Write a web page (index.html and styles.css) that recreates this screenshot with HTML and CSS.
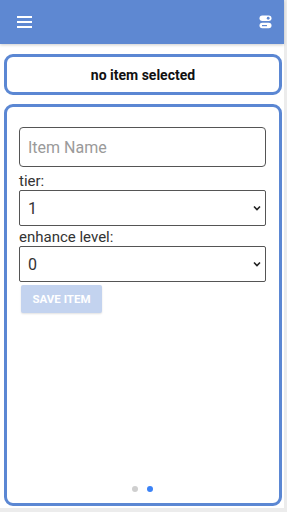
FILE: index.html
```html
<!doctype html>
<html>
<head>
    <meta charset="UTF-8">
    <link rel="stylesheet" href="styles.css">
</head>
<body>
    <div class="app">
        <header class="topbar">
            <svg class="menu-icon" width="15" height="12" viewBox="0 0 15 12">
                <rect x="0" y="0" width="15" height="2" fill="#fff"/>
                <rect x="0" y="5" width="15" height="2" fill="#fff"/>
                <rect x="0" y="10" width="15" height="2" fill="#fff"/>
            </svg>
            <svg class="toggle-icon" width="13" height="14" viewBox="0 0 13 14">
                <rect x="0.5" y="0.5" width="12" height="5.5" rx="2.75" fill="#fff"/>
                <circle cx="9.2" cy="3.25" r="1.4" fill="#5e88d2"/>
                <rect x="0.5" y="7.8" width="12" height="5.5" rx="2.75" fill="#fff"/>
                <rect x="3" y="10" width="5" height="1.2" fill="#5e88d2"/>
            </svg>
        </header>

        <div class="card status">no item selected</div>

        <div class="card editor">
            <input class="field" type="text" placeholder="Item Name">
            <label class="label">tier:</label>
            <div class="select-wrap">
                <select class="field-select">
                    <option>1</option>
                </select>
                <svg class="chevron" width="8" height="6" viewBox="0 0 8 6">
                    <path d="M1 1.5 L4 4.5 L7 1.5" stroke="#222" stroke-width="1.6" fill="none"/>
                </svg>
            </div>
            <label class="label">enhance level:</label>
            <div class="select-wrap">
                <select class="field-select">
                    <option>0</option>
                </select>
                <svg class="chevron" width="8" height="6" viewBox="0 0 8 6">
                    <path d="M1 1.5 L4 4.5 L7 1.5" stroke="#222" stroke-width="1.6" fill="none"/>
                </svg>
            </div>
            <button class="save-btn" disabled>SAVE ITEM</button>

            <div class="dots">
                <span class="dot"></span>
                <span class="dot active"></span>
            </div>
        </div>
    </div>
</body>
</html>
```

FILE: styles.css
```css
* {
    box-sizing: border-box;
}
body {
    margin: 0;
    background-color: #ececec;
    font-family: Roboto, "Liberation Sans", sans-serif;
}

.app {
    width: 284px;
    height: 508px;
    background-color: #fff;
    display: flex;
    flex-direction: column;
}

.topbar {
    height: 44px;
    background-color: #5e88d2;
    display: flex;
    align-items: center;
    justify-content: space-between;
    padding: 0 12px 0 17px;
    box-shadow: 0 1px 3px rgba(0,0,0,0.2);
}

.card {
    margin: 0 2px 0 4px;
    border: 3px solid #5b87d3;
    border-radius: 9px;
    background-color: #fff;
}

.status {
    margin-top: 10px;
    height: 41px;
    display: flex;
    align-items: center;
    justify-content: center;
    font-weight: bold;
    font-size: 14px;
    color: #111;
}

.editor {
    margin-top: 9px;
    height: 402px;
    padding: 20px 13px 0 12px;
    display: flex;
    flex-direction: column;
    position: relative;
}

.field {
    height: 40px;
    border: 1px solid #555;
    border-radius: 4px;
    padding: 0 8px;
    font-family: inherit;
    font-size: 16px;
    color: #222;
    margin-bottom: 7px;
    outline: none;
}
.field::placeholder {
    color: #9a9a9a;
}

.label {
    font-size: 15px;
    line-height: 14px;
    color: #333;
    margin-bottom: 2px;
}

.select-wrap {
    position: relative;
    margin-bottom: 4px;
}

.field-select {
    width: 100%;
    height: 36px;
    border: 1px solid #555;
    border-radius: 2px;
    background-color: #fff;
    padding: 0 8px;
    font-family: inherit;
    font-size: 16px;
    color: #333;
    -webkit-appearance: none;
    appearance: none;
    outline: none;
}

.chevron {
    position: absolute;
    right: 5px;
    top: 15px;
    pointer-events: none;
}

.save-btn {
    align-self: flex-start;
    margin: -1px 0 0 2px;
    width: 81px;
    height: 28px;
    border: none;
    border-radius: 2px;
    background-color: #c3d3ef;
    color: #fff;
    font-family: inherit;
    font-weight: bold;
    font-size: 11.5px;
    padding: 0;
    box-shadow: 0 1px 2px rgba(0,0,0,0.12);
}

.dots {
    position: absolute;
    bottom: 11px;
    left: 0;
    right: 0;
    display: flex;
    justify-content: center;
    gap: 9px;
    padding-right: 2px;
}
.dot {
    width: 6px;
    height: 6px;
    border-radius: 50%;
    background-color: #cfcfcf;
}
.dot.active {
    background-color: #3b82f6;
}
```
